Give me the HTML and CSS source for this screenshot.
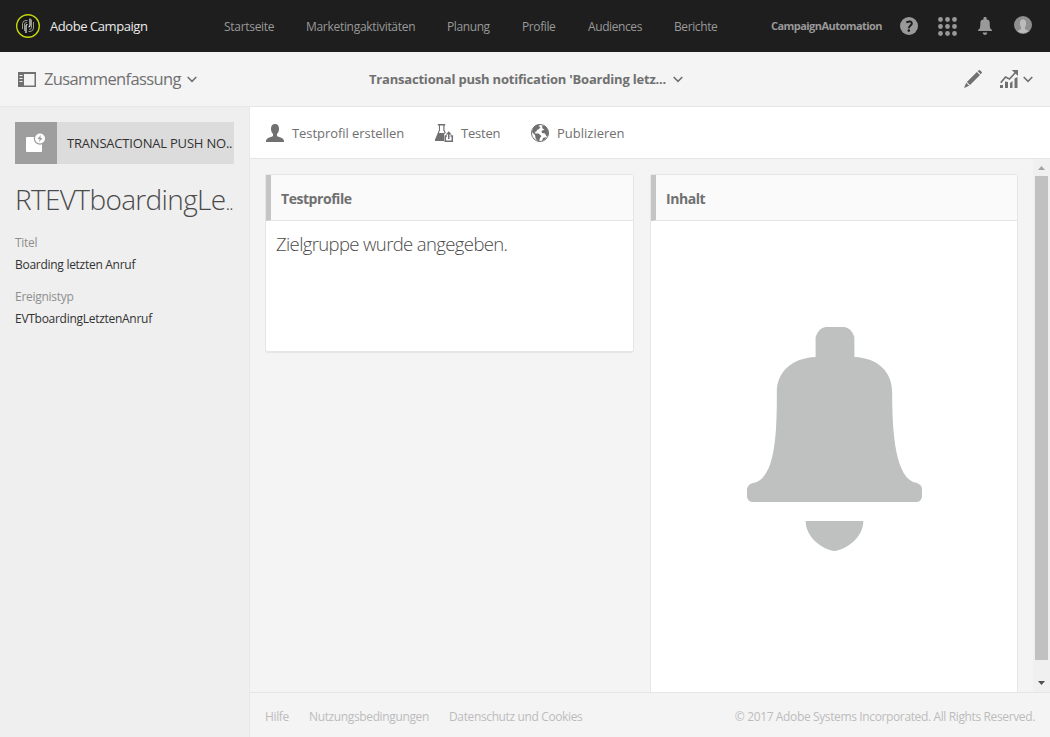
FILE: index.html
```html
<!DOCTYPE html>
<html lang="de">
<head>
<meta charset="utf-8">
<title>Adobe Campaign</title>
<link rel="stylesheet" href="styles.css">
</head>
<body>
<header class="topbar">
  <svg class="logo" viewBox="0 0 24 24"><circle cx="12" cy="12" r="11.3" fill="#171717" stroke="#c3d60b" stroke-width="1.4"/><g fill="none" stroke="#a9ab98" stroke-width=".9"><path d="M6.5 15V9.5Q6.7 6.500 10 6.500H11.500M8.500 17V10Q8.700 8.500 11 8.500M12.500 17.500H14Q17.500 17.200 17.500 14V8M13 15.500Q15.500 15.300 15.500 13.500V5.500"/></g><path d="M10 19v-7q0-1.500 1.500-1.500M14 4.500v7q0 1.500-1.500 1.500" fill="none" stroke="#fff" stroke-width="1.1"/></svg>
  <span class="brand">Adobe Campaign</span>
  <nav class="nav">
    <a class="n1">Startseite</a><a class="n2">Marketingaktivitäten</a><a class="n3">Planung</a><a class="n4">Profile</a><a class="n5">Audiences</a><a class="n6">Berichte</a>
  </nav>
  <span class="org">CampaignAutomation</span>
  <div class="tools">
    <svg class="help" viewBox="0 0 18 18"><circle cx="9" cy="9" r="9" fill="#999"/><path d="M6.300 5.300Q11.800 3 11.800 6.500C11.800 8.500 8.900 8.700 8.900 11.200" fill="none" stroke="#1e1e1e" stroke-width="2"/><circle cx="8.800" cy="13.600" r="1.300" fill="#1e1e1e"/></svg>
    <svg class="apps" viewBox="0 0 19 19" fill="#999"><circle cx="2.500" cy="2.500" r="2.400"/><circle cx="9.500" cy="2.500" r="2.400"/><circle cx="16.500" cy="2.500" r="2.400"/><circle cx="2.500" cy="9.500" r="2.400"/><circle cx="9.500" cy="9.500" r="2.400"/><circle cx="16.500" cy="9.500" r="2.400"/><circle cx="2.500" cy="16.500" r="2.400"/><circle cx="9.500" cy="16.500" r="2.400"/><circle cx="16.500" cy="16.500" r="2.400"/></svg>
    <svg class="alert" viewBox="0 0 176 225" fill="#999"><path d="M69 30V12Q70 1 80 0H96Q107 1 108 12V30C132 31 147 45 147 65C147 105 149 153 171 156Q176 158 176 162V170Q176 175 170 175H6Q0 175 0 170V162Q1 157 6 156C29 152 30 105 30 65C30 45 45 31 69 30ZM59 194H117C117 211 101 222 88 225C75 222 59 211 59 194Z"/></svg>
    <svg class="avatar" viewBox="0 0 18 18"><circle cx="9" cy="9" r="9" fill="#8f8f8f"/><path d="M3.800 15.500Q4.500 13.700 7 13.200V11Q5.500 9 6 6Q6.500 3.300 9 3.300T12 6Q12.500 9 11 11V13.200Q13.500 13.700 14.200 15.500Q9 18.500 3.800 15.500Z" fill="#bcbcbc"/></svg>
  </div>
</header>
<section class="subbar">
  <svg class="rail-icon" viewBox="0 0 18 15"><path d="M0 0H18V15H0ZM6 2V13.500H16.500V2ZM1.500 3V4H4.500V3ZM1.500 6V7H4.500V6ZM1.500 9V10H4.500V9Z" fill="#707070" fill-rule="evenodd"/></svg>
  <span class="summary">Zusammenfassung</span>
  <svg class="chev chev-a" viewBox="0 0 10 7"><path d="M.7 1L5 5.300L9.300 1"/></svg>
  <span class="title">Transactional push notification 'Boarding letz...</span>
  <svg class="chev chev-b" viewBox="0 0 10 7"><path d="M.7 1L5 5.300L9.300 1"/></svg>
  <svg class="pencil" viewBox="0 0 18 18" fill="#707070"><path d="M13.700 1.200L15 0Q15.500-.2 16 .2L17.800 2Q18.200 2.500 17.800 3L16.700 4.200ZM12.900 2L16 5.100L6 15L2.900 12ZM2.200 12.700L5.200 15.700L0 18Z"/></svg>
  <svg class="chart" viewBox="0 0 18 18"><path d="M0 15H3V18H0ZM5 11.500L8 12V18H5ZM10 13L12.500 11V18H10ZM14.500 8.500L17.500 7V18H14.500Z" fill="#707070"/><path d="M.7 12.700L5.500 7L9.500 9L15.500 2.500" fill="none" stroke="#707070" stroke-width="1.700"/><path d="M11.700 0H18V6Z" fill="#707070"/></svg>
  <svg class="chev chev-c" viewBox="0 0 10 7"><path d="M.7 1L5 5.300L9.300 1"/></svg>
</section>
<div class="body">
  <aside class="rail">
    <div class="type">
      <div class="type-icon"><svg viewBox="0 0 20 20"><rect x="0" y="4" width="16" height="15" rx="1" fill="#fff"/><circle cx="14" cy="5.500" r="6.200" fill="#9e9e9e"/><circle cx="14" cy="5.500" r="5" fill="#fff"/><path d="M15 2L11.500 5.800L13.600 6.200L13 9L16.500 5.200L14.300 4.800Z" fill="#9e9e9e"/></svg></div>
      <span class="type-name">TRANSACTIONAL PUSH NO..</span>
    </div>
    <h1>RTEVTboardingLe<span class="dots">..</span></h1>
    <dl><dt>Titel</dt><dd>Boarding letzten Anruf</dd><dt>Ereignistyp</dt><dd>EVTboardingLetztenAnruf</dd></dl>
  </aside>
  <main class="main">
    <div class="actions">
      <svg class="person" viewBox="0 0 18 18" fill="#707070"><path d="M9 0C11.600 0 13 1.800 13 4.500C13 7.300 12 9 11 10V12C11.500 13 17.700 13 18 17V18H0V17C.3 13 6.500 13 7 12V10C6 9 5 7.300 5 4.500C5 1.800 6.400 0 9 0Z"/></svg>
      <span class="a1">Testprofil erstellen</span>
      <svg class="flask" viewBox="0 0 18 18"><path d="M2.800 0H10.200V1.400H9.500V6L12 11.500V17H0V15.500L4 6V1.400H2.800Z" fill="#707070"/><path d="M5 1.400H8.300V6.200L9.600 9H3.900L5 6.200Z" fill="#fff"/><path d="M9 10.500L13.700 6L18 9V18H9Z" fill="#fff"/><path d="M12 12H10.200V17.200H17.300V12H15.500M13.750 15V9" fill="none" stroke="#707070" stroke-width="1.500"/><path d="M13.750 7.200L16.700 10.500H10.800Z" fill="#707070"/></svg>
      <span class="a2">Testen</span>
      <svg class="globe" viewBox="0 0 18 18"><circle cx="9" cy="9" r="8.500" fill="#fff" stroke="#707070"/><path d="M2 4Q5 0 9 .7L7.500 2.300L9.500 3L8 5L6 6L5 8L3.500 7.500L4.500 9.500L7.500 9.500L10.500 12L9 14L8 17.700Q5.500 17 4.500 14L4 11L1 8ZM11 2L13.500 1.500Q18 5 17.500 11L15.500 12.500L14 9.500L11 9L10.500 7L13.500 5.500L11.500 4.500ZM12 14L15 13L14 15.500L11 17Z" fill="#707070"/></svg>
      <span class="a3">Publizieren</span>
    </div>
    <div class="content">
      <div class="cards">
        <article class="card card-profiles"><h2>Testprofile</h2><p>Zielgruppe wurde angegeben.</p></article>
        <article class="card card-content"><h2>Inhalt</h2>
          <svg class="bell" viewBox="0 0 176 225" preserveAspectRatio="none" fill="#bfc1c0"><path d="M69 30V10Q72 1 79 0H98Q105 1 108 10V30C132 31 146 45 146 65C146 105 149 153 171 156Q176 158 176 162V170Q175 175 170 175H6Q1 175 0 170V162Q1 157 6 156C29 152 30 105 30 65C30 45 45 31 69 30ZM59 194H117C117 211 99 223 88 224C77 223 59 211 59 194Z"/></svg>
        </article>
      </div>
      <div class="scrollbar"><svg class="up" viewBox="0 0 7 4"><path d="M0 4L3.500 0L7 4Z" fill="#a3a3a3"/></svg><div class="thumb"></div><svg class="down" viewBox="0 0 7 4"><path d="M0 0H7L3.500 4Z" fill="#505050"/></svg></div>
    </div>
    <footer><a class="f1">Hilfe</a><a class="f2">Nutzungsbedingungen</a><a class="f3">Datenschutz und Cookies</a><span class="copy">© 2017 Adobe Systems Incorporated. All Rights Reserved.</span></footer>
  </main>
</div>
</body>
</html>
```
FILE: styles.css
```css
*{box-sizing:border-box}
body{margin:0;width:1050px;height:737px;overflow:hidden;display:flex;flex-direction:column;background:#f4f4f4;color:#707070;font-family:"Open Sans","Noto Sans",sans-serif;font-size:13px;white-space:nowrap}
svg{display:block;flex:none;overflow:visible}
span,a{flex:none}
.topbar{height:52px;flex:none;background:#1e1e1e;display:flex;align-items:center;color:#999}
.logo{width:24px;height:24px;margin-left:16px}
.brand{margin-left:10px;width:174px;color:#ebebeb;font-size:13px;font-weight:500;letter-spacing:-.43px}
.nav{display:flex;width:547px}
.nav a{font-size:12px;letter-spacing:-.4px}
.nav .n1,.nav .n2{letter-spacing:-.3px}
.n1{width:82px}.n2{width:141px}.n3{width:75px}.n4{width:66px}.n5{width:86px}
.org{font-size:11px;font-weight:700;width:129px;letter-spacing:-.55px;margin-top:-1px}
.tools{display:flex;align-items:center}
.help{width:18px;height:18px}
.apps{width:19px;height:19px;margin-left:20px}
.alert{width:14px;height:18px;margin-left:21px}
.avatar{width:18px;height:18px;margin-left:22px;margin-top:-3px}
.subbar{height:55px;flex:none;background:#f4f4f4;border-bottom:1px solid #e6e6e6;display:flex;align-items:center}
.rail-icon{width:18px;height:15px;margin-left:18px}
.summary{margin:-2px 0 0 8px;width:143px;font-size:16.500px;letter-spacing:-.62px}
.chev{width:10px;height:7px;fill:none;stroke:#707070;stroke-width:1.600}
.title{margin:-1px 0 0 172px;width:304px;font-size:13px;font-weight:700;letter-spacing:-.2px}
.pencil{width:18px;height:18px;margin-left:281px}
.chart{width:18px;height:18px;margin-left:18px}
.chev-c{margin-left:5px}
.body{flex:1;display:flex;min-height:0}
.rail{width:250px;flex:none;background:#efefef;border-right:1px solid #e8e8e8;padding:15px}
.type{height:42px;display:flex;align-items:center;background:#dcdcdc;width:219px}
.type-icon{width:42px;height:42px;background:#9e9e9e;padding:11px}
.type-icon svg{width:20px;height:20px}
.type-name{margin-left:10px;color:#323232;font-size:13px;letter-spacing:-.2px}
h1{margin:13px 0 0;height:45px;line-height:45px;font-size:28px;font-weight:300;color:#4b4b4b;letter-spacing:-.65px}
.dots{font-size:20px;letter-spacing:-1.300px}
dl{margin:10px 0 0;font-size:12px;letter-spacing:-.28px}
dt{height:22px;line-height:22px;color:#8e8e8e}
dd{height:22px;line-height:22px;margin:0 0 10px;color:#323232}
.main{flex:1;display:flex;flex-direction:column;min-width:0}
.actions{height:52px;flex:none;background:#fff;border-bottom:1px solid #e6e6e6;display:flex;align-items:center;font-size:13px;padding-left:16px}
.person,.flask,.globe{width:18px;height:18px}
.a1{margin-left:8px;width:143px;letter-spacing:-.06px}
.a2{margin-left:8px;width:70px;letter-spacing:-.2px}
.a3{margin-left:8px}
.content{flex:1;display:flex;min-height:0}
.cards{flex:1;display:flex;align-items:flex-start;gap:16px;padding:15px 0 0 15px}
.card{background:#fff;border:1px solid #e6e6e6;border-radius:3px}
.card-profiles{width:369px;height:179px;border-bottom-width:2px}
.card-content{width:368px;height:519px;border-bottom:0;border-radius:3px 3px 0 0}
h2{margin:0;height:46px;border-bottom:1px solid #e6e6e6;background:#fafafa;display:flex;align-items:center;font-size:14px;font-weight:700;border-left:5px solid #c5c5c5;padding:1px 0 0 10px;letter-spacing:-.45px}
.card p{margin:7px 0 0 10px;font-size:18.500px;line-height:32px;font-weight:300;color:#4b4b4b;letter-spacing:-.62px}
.bell{width:175px;height:225px;margin:106px 0 0 95.500px}
.scrollbar{width:17px;background:#f0f0f0;display:flex;flex-direction:column;align-items:center;padding:7px 2px 7px 2px}
.up,.down{width:7px;height:4px}
.thumb{width:13px;height:484px;background:#c1c1c1;margin:6px 0 21px}
footer{height:45px;flex:none;border-top:1px solid #e6e6e6;display:flex;align-items:center;padding:3px 15px 0;font-size:12px;font-weight:500;color:#bcbcbc;letter-spacing:-.37px}
.f1{width:44px}.f2{width:140px}.copy{margin-left:auto}
```
